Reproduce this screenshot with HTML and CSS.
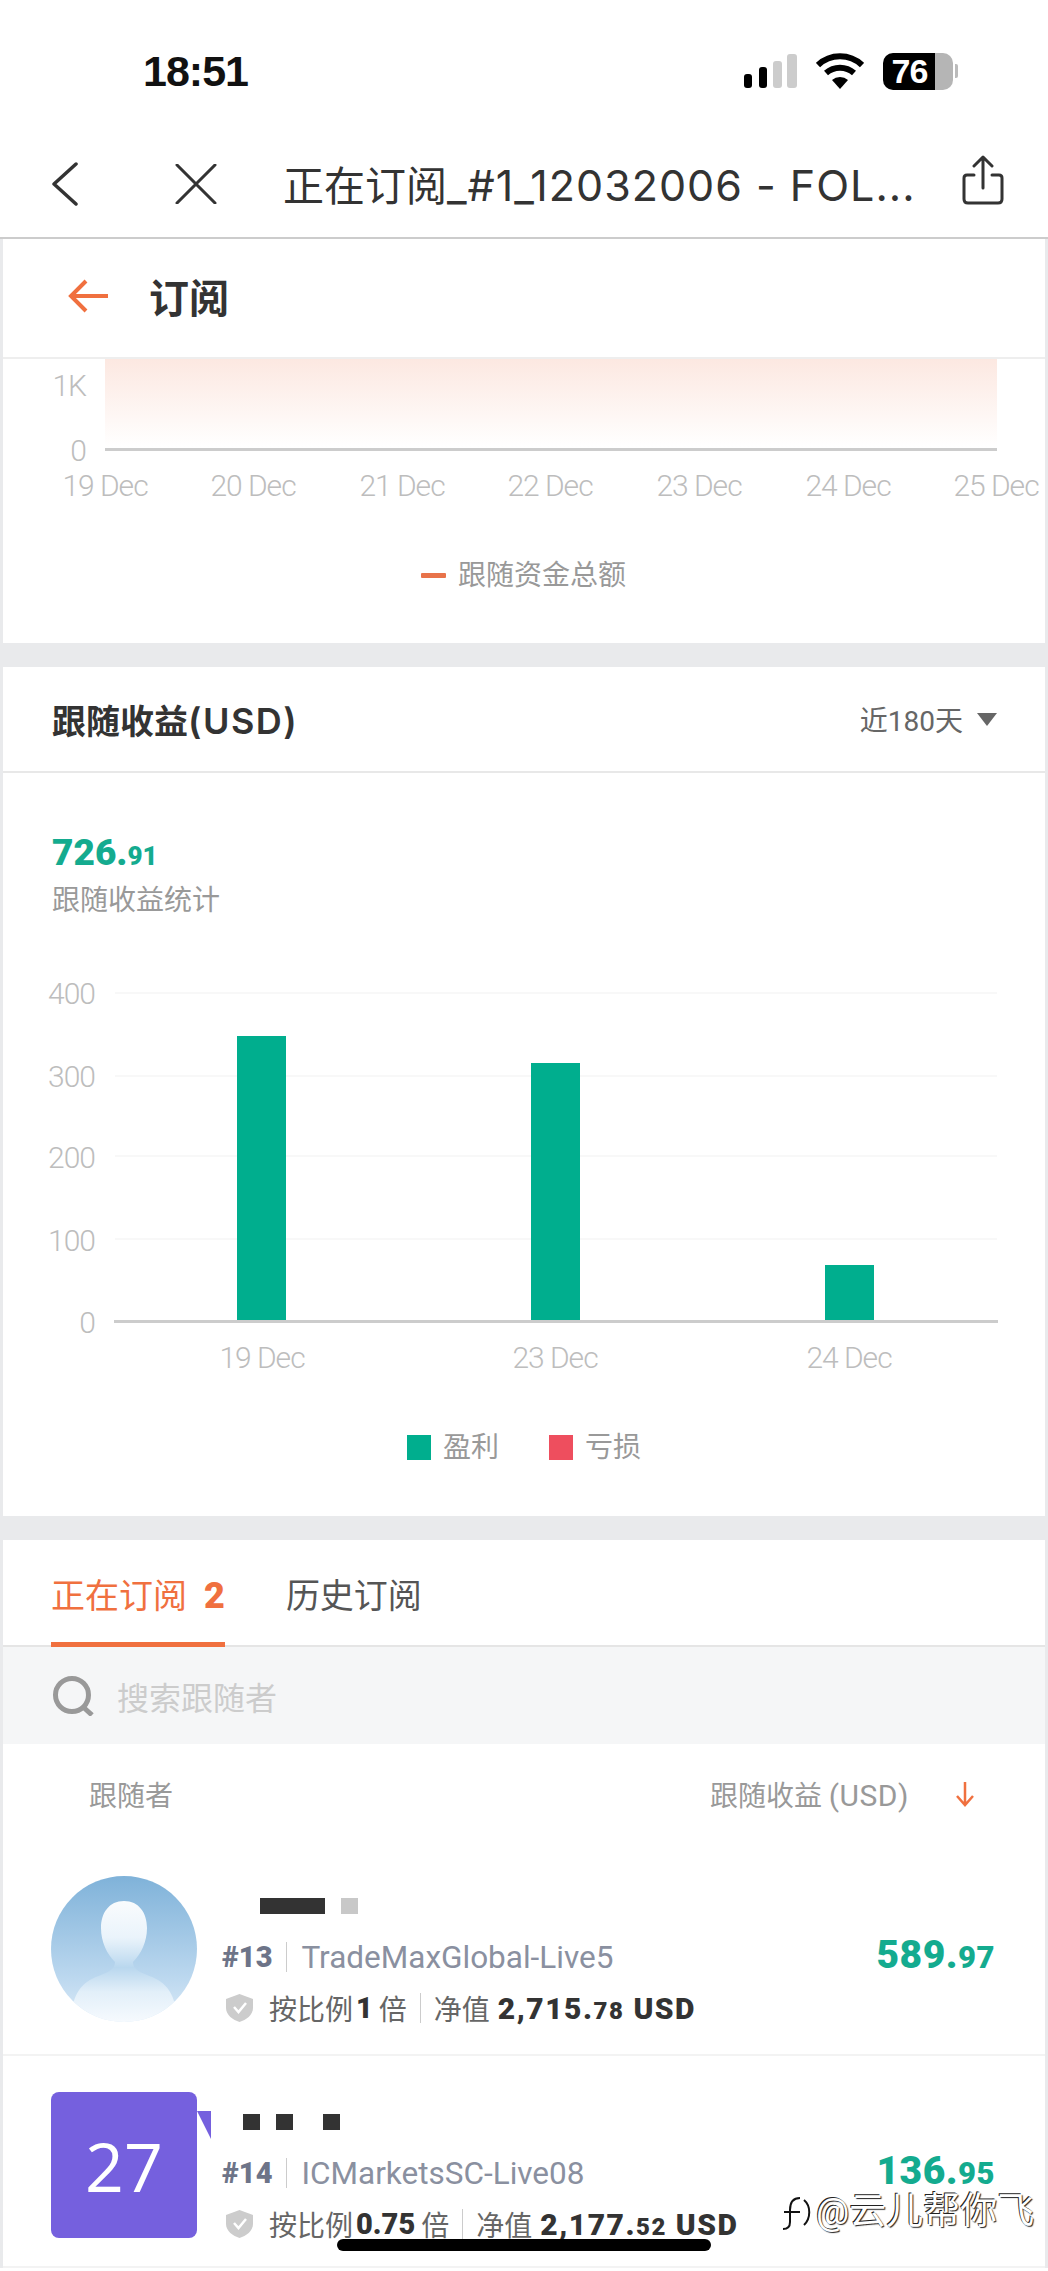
FILE: index.html
```html
<!DOCTYPE html>
<html lang="zh">

<head>
  <meta charset="UTF-8">
  <meta name="viewport" content="width=device-width, initial-scale=1.0">
  <link rel="stylesheet" href="styles.css">
  <title>正在订阅</title>
</head>

<body>
  <div class="status-bar">
    <span class="clock">18:51</span>
    <div class="status-icons">
      <svg class="signal" width="54" height="34" viewBox="0 0 54 34">
        <rect x="0" y="20" width="8" height="14" rx="3" fill="#000" />
        <rect x="15" y="13" width="8" height="21" rx="3" fill="#000" />
        <rect x="29" y="7" width="9" height="27" rx="3" fill="#ccc" />
        <rect x="43" y="0" width="10" height="34" rx="3" fill="#ccc" />
      </svg>
      <svg class="wifi" width="48" height="36" viewBox="0 0 48 36">
        <path d="M2 12 A32 32 0 0 1 46 12" fill="none" stroke="#000" stroke-width="6" />
        <path d="M10 20 A21 21 0 0 1 38 20" fill="none" stroke="#000" stroke-width="6" />
        <path d="M16 27 L24 36 L32 27 A12 12 0 0 0 16 27 Z" fill="#000" />
      </svg>
      <div class="battery"><span>76</span></div>
      <div class="battery-nub"></div>
    </div>
  </div>

  <div class="nav">
    <svg class="nav-back" width="27" height="44" viewBox="0 0 27 44">
      <path d="M25 2 L3 22 L25 42" fill="none" stroke="#333" stroke-width="3.5" stroke-linecap="round" stroke-linejoin="round" />
    </svg>
    <svg class="nav-close" width="42" height="40" viewBox="0 0 42 40">
      <path d="M2 1 L40 39 M40 1 L2 39" fill="none" stroke="#333" stroke-width="3" stroke-linecap="round" />
    </svg>
    <div class="nav-title">正在订阅<span>_#1_12032006 - FOL...</span></div>
    <svg class="nav-share" width="42" height="50" viewBox="0 0 42 50">
      <path d="M12 20 H5 Q2 20 2 23 V44 Q2 48 6 48 H36 Q40 48 40 44 V23 Q40 20 37 20 H30" fill="none" stroke="#333" stroke-width="3" stroke-linecap="round" />
      <path d="M21 33 V3 M12 11 L21 2 L30 11" fill="none" stroke="#333" stroke-width="3" stroke-linecap="round" stroke-linejoin="round" />
    </svg>
  </div>

  <div class="page">
    <div class="sub-head">
      <svg width="42" height="34" viewBox="0 0 42 34">
        <path d="M40 17 H3 M18 2 L3 17 L18 32" fill="none" stroke="#f0703f" stroke-width="4" stroke-linejoin="miter" />
      </svg>
      <span>订阅</span>
    </div>

    <!-- 跟随资金总额 -->
    <section class="card">
      <svg class="chart chart-funds" viewBox="3 359 1042 284" width="1042" height="284">
        <defs>
          <linearGradient id="area" x1="0" y1="0" x2="0" y2="1">
            <stop offset="0" stop-color="#fce8e1" />
            <stop offset="1" stop-color="#fff" />
          </linearGradient>
        </defs>
        <rect x="105" y="359" width="892" height="88" fill="url(#area)" />
        <rect x="105" y="448" width="892" height="3" fill="#ccc" />
        <text class="tick" x="86" y="396" text-anchor="end">1K</text>
        <text class="tick" x="86" y="461" text-anchor="end">0</text>
        <text class="tick" x="105" y="496" text-anchor="middle">19 Dec</text>
        <text class="tick" x="253" y="496" text-anchor="middle">20 Dec</text>
        <text class="tick" x="402" y="496" text-anchor="middle">21 Dec</text>
        <text class="tick" x="550" y="496" text-anchor="middle">22 Dec</text>
        <text class="tick" x="699" y="496" text-anchor="middle">23 Dec</text>
        <text class="tick" x="848" y="496" text-anchor="middle">24 Dec</text>
        <text class="tick" x="996" y="496" text-anchor="middle">25 Dec</text>
        <rect x="421" y="573" width="25" height="5" rx="1" fill="#e8734a" />
        <text class="legend" x="458" y="585">跟随资金总额</text>
      </svg>
    </section>

    <section class="card card-gap">
      <div class="card-head">
        <h2>跟随收益<span>(USD)</span></h2>
        <div class="range">近180天<i class="caret"></i></div>
      </div>
      <div class="total">
        <div class="total-num">726.<small>91</small></div>
        <div class="total-label">跟随收益统计</div>
      </div>
      <svg class="chart chart-profit" viewBox="3 940 1042 576" width="1042" height="576">
        <g fill="#f8f8f8">
          <rect x="115" y="992" width="882" height="2" />
          <rect x="115" y="1075" width="882" height="2" />
          <rect x="115" y="1155" width="882" height="2" />
          <rect x="115" y="1238" width="882" height="2" />
        </g>
        <g fill="#00ae8e">
          <rect x="237" y="1036" width="49" height="285" />
          <rect x="531" y="1063" width="49" height="258" />
          <rect x="825" y="1265" width="49" height="56" />
        </g>
        <rect x="114" y="1320" width="884" height="3" fill="#ccc" />
        <text class="tick" x="95" y="1004" text-anchor="end">400</text>
        <text class="tick" x="95" y="1087" text-anchor="end">300</text>
        <text class="tick" x="95" y="1168" text-anchor="end">200</text>
        <text class="tick" x="95" y="1251" text-anchor="end">100</text>
        <text class="tick" x="95" y="1333" text-anchor="end">0</text>
        <text class="tick" x="262" y="1368" text-anchor="middle">19 Dec</text>
        <text class="tick" x="555" y="1368" text-anchor="middle">23 Dec</text>
        <text class="tick" x="849" y="1368" text-anchor="middle">24 Dec</text>
        <rect x="407" y="1435" width="24" height="25" fill="#00ae8e" />
        <text class="legend" x="443" y="1457">盈利</text>
        <rect x="549" y="1435" width="24" height="25" fill="#ee4e5e" />
        <text class="legend" x="585" y="1457">亏损</text>
      </svg>
    </section>

    <section class="card card-gap">
      <div class="tabs">
        <div class="tab active">正在订阅<b>2</b></div>
        <div class="tab">历史订阅</div>
      </div>
      <div class="search">
        <svg width="42" height="40" viewBox="0 0 42 40">
          <circle cx="20" cy="19" r="16.5" fill="none" stroke="#999" stroke-width="5" />
          <path d="M30 30 L40 39" stroke="#999" stroke-width="5" />
        </svg>
        <span>搜索跟随者</span>
      </div>
      <div class="list-head">
        <span>跟随者</span>
        <span class="sort"><span>跟随收益 <em>(USD)</em></span>
          <svg width="20" height="26" viewBox="0 0 20 26">
            <path d="M10 1 V24 M2 15 L10 24 L18 15" fill="none" stroke="#f0703f" stroke-width="2.5" />
          </svg>
        </span>
      </div>

      <div class="row">
        <svg class="avatar" width="146" height="146" viewBox="0 0 146 146">
          <defs>
            <linearGradient id="sky" x1="0" y1="0" x2="0" y2="1">
              <stop offset="0" stop-color="#7fb2d9" />
              <stop offset="0.7" stop-color="#bcd8ef" />
              <stop offset="1" stop-color="#dcebf8" />
            </linearGradient>
            <linearGradient id="person" x1="0" y1="0" x2="0" y2="1">
              <stop offset="0" stop-color="#fff" stop-opacity="0.95" />
              <stop offset="0.3" stop-color="#eef6fc" stop-opacity="0.95" />
              <stop offset="0.55" stop-color="#b9d7ee" />
              <stop offset="0.75" stop-color="#e2eff9" />
              <stop offset="1" stop-color="#f6fafe" />
            </linearGradient>
            <clipPath id="round"><circle cx="73" cy="73" r="73" /></clipPath>
          </defs>
          <g clip-path="url(#round)">
            <rect width="146" height="146" fill="url(#sky)" />
            <path d="M73 25 C58 25 50 37 50 52 C50 66 56 78 64 86 C64 92 60 95 50 99 C34 105 22 112 19 146 H127 C124 112 112 105 96 99 C86 95 82 92 82 86 C90 78 96 66 96 52 C96 37 88 25 73 25 Z" fill="url(#person)" />
          </g>
        </svg>
        <div class="info">
          <div class="name name-a"><i class="dark w65"></i><i class="light w17"></i></div>
          <div class="server"><b>#13</b><i class="sep"></i>TradeMaxGlobal-Live5</div>
          <div class="meta">
            <svg class="shield" width="27" height="28" viewBox="0 0 27 28">
              <path d="M13.5 0 L27 5 V14 C27 21 20 26 13.5 28 C7 26 0 21 0 14 V5 Z" fill="#ccc" />
              <path d="M8 13 L12.5 18 L20 9" fill="none" stroke="#fff" stroke-width="2.5" />
            </svg>
            <span>按比例</span><b class="ratio">1</b><span>倍</span><i class="sep"></i><span>净值</span>
            <b class="equity">2,715.<small>78</small> USD</b>
          </div>
        </div>
        <div class="amount">589.<small>97</small></div>
      </div>

      <div class="row row-last">
        <div class="avatar avatar-num">27<i class="flag"></i></div>
        <div class="info">
          <div class="name name-b"><i class="dark w17"></i><i class="dark w17"></i><i class="dark w17 far"></i></div>
          <div class="server"><b>#14</b><i class="sep"></i>ICMarketsSC-Live08</div>
          <div class="meta">
            <svg class="shield" width="27" height="28" viewBox="0 0 27 28">
              <path d="M13.5 0 L27 5 V14 C27 21 20 26 13.5 28 C7 26 0 21 0 14 V5 Z" fill="#ccc" />
              <path d="M8 13 L12.5 18 L20 9" fill="none" stroke="#fff" stroke-width="2.5" />
            </svg>
            <span>按比例</span><b class="ratio">0.75</b><span>倍</span><i class="sep"></i><span>净值</span>
            <b class="equity">2,177.<small>52</small> USD</b>
          </div>
        </div>
        <div class="amount">136.<small>95</small></div>
      </div>
    </section>
  </div>

  <div class="home-bar"></div>
  <div class="watermark">
    <svg width="36" height="40" viewBox="0 0 36 40">
      <path d="M22 6 C14 6 12 12 12 18 V30 C12 35 9 37 5 37 M6 20 H22 M26 8 C33 14 33 26 26 33" fill="none" stroke="#fff" stroke-width="5" />
      <path d="M22 6 C14 6 12 12 12 18 V30 C12 35 9 37 5 37 M6 20 H22 M26 8 C33 14 33 26 26 33" fill="none" stroke="#111" stroke-width="2" />
    </svg>
    <span>@云儿帮你飞</span>
  </div>
</body>

</html>
```

FILE: styles.css
```css
* {
  box-sizing: border-box;
}

html,
body {
  margin: 0;
  padding: 0;
}

body {
  position: relative;
  width: 1048px;
  height: 2271px;
  overflow: hidden;
  background-color: #fff;
  color: #333;
  font-family: "Roboto", "Noto Sans CJK SC", sans-serif;
}

.status-bar {
  display: flex;
  justify-content: space-between;
  align-items: center;
  height: 142px;
  padding: 0 90px 0 143px;
}

.clock {
  color: #111;
  font-family: "Liberation Sans", sans-serif;
  font-size: 43px;
  font-weight: 700;
  letter-spacing: -1px;
}

.status-icons {
  display: flex;
  align-items: center;
}

.wifi {
  margin-left: 18px;
}

.battery {
  display: flex;
  align-items: center;
  justify-content: center;
  width: 70px;
  height: 37px;
  margin-left: 19px;
  padding-right: 17px;
  border-radius: 10px;
  background: linear-gradient(90deg, #000 75%, #b5b5b5 75%);
  color: #fff;
  font-family: "Liberation Sans", sans-serif;
  font-size: 34px;
  font-weight: 700;
  letter-spacing: -1px;
}

.battery-nub {
  width: 3px;
  height: 14px;
  margin-left: 2px;
  border-radius: 0 2px 2px 0;
  background-color: #bbb;
}

.nav {
  display: flex;
  align-items: center;
  height: 97px;
  padding-left: 51px;
  padding-bottom: 12px;
  border-bottom: 2px solid #ccc;
}

.nav-close {
  margin-left: 97px;
}

.nav-title {
  width: 679px;
  margin-left: 66px;
  color: #333;
  font-family: "Noto Sans CJK SC", sans-serif;
  font-size: 41px;
  line-height: 50px;
  white-space: nowrap;
}

.nav-title span {
  font-family: "Inter", sans-serif;
  font-size: 43px;
  letter-spacing: 1px;
}

.nav-share {
  margin-top: -8px;
}

.page {
  padding: 0 3px;
  background-color: #e9eaec;
}

.sub-head {
  display: flex;
  align-items: center;
  height: 120px;
  padding-left: 65px;
  padding-bottom: 4px;
  border-bottom: 2px solid #eee;
  background-color: #fff;
}

.sub-head span {
  margin-left: 39px;
  font-size: 40px;
  font-weight: 700;
}

.card {
  background-color: #fff;
}

.card-gap {
  margin-top: 24px;
}

.chart {
  display: block;
}

.tick {
  fill: #bdbdbd;
  font-family: "Roboto", sans-serif;
  font-size: 30px;
  font-weight: 300;
  letter-spacing: -1px;
}

.legend {
  fill: #999;
  font-family: "Noto Sans CJK SC", sans-serif;
  font-size: 28px;
}

.card-head {
  display: flex;
  justify-content: space-between;
  align-items: center;
  height: 106px;
  padding: 0 48px 0 49px;
  border-bottom: 2px solid #e8e8e8;
}

.card-head h2 {
  margin: 0;
  font-size: 34px;
  font-weight: 700;
}

.card-head h2 span {
  font-family: "Inter", sans-serif;
  font-size: 36px;
  font-weight: 600;
  letter-spacing: 1.5px;
}

.range {
  display: flex;
  align-items: center;
  color: #666;
  font-size: 28px;
}

.caret {
  width: 0;
  height: 0;
  margin-left: 14px;
  border-left: 10px solid transparent;
  border-right: 10px solid transparent;
  border-top: 13px solid #666;
}

.total {
  height: 0;
  padding: 58px 0 0 49px;
}

.total-num {
  color: #14ab8f;
  font-size: 37px;
  font-weight: 900;
  line-height: 44px;
}

.total-num small {
  font-size: 26px;
}

.total-label {
  margin-top: 3px;
  color: #999;
  font-size: 28px;
  line-height: 40px;
}

.chart-profit {
  margin-top: 109px;
}

.tabs {
  display: flex;
  height: 107px;
  padding-left: 48px;
  border-bottom: 2px solid #e5e5e5;
}

.tab {
  height: 107px;
  margin-right: 61px;
  padding-top: 32px;
  color: #555;
  font-size: 34px;
  line-height: 48px;
}

.tab b {
  margin-left: 17px;
  font-size: 36px;
  font-weight: 900;
}

.tab.active {
  border-bottom: 5px solid #f0703f;
  color: #f0703f;
}

.search {
  display: flex;
  align-items: center;
  height: 97px;
  padding-left: 49px;
  background-color: #f5f6f7;
  color: #ccc;
  font-size: 32px;
}

.search span {
  margin-left: 23px;
}

.list-head {
  display: flex;
  justify-content: space-between;
  align-items: center;
  height: 100px;
  padding: 0 70px 0 86px;
  color: #999;
  font-size: 28px;
}

.list-head em {
  font-size: 30px;
  font-style: normal;
  letter-spacing: 0.5px;
}

.sort {
  display: flex;
  align-items: center;
}

.sort svg {
  margin-left: 46px;
}

.row {
  display: flex;
  align-items: center;
  height: 212px;
  padding: 0 50px 0 48px;
  border-bottom: 2px solid #f3f3f3;
}

.row-last {
  height: 212px;
  padding-top: 8px;
}

.avatar {
  flex: none;
  width: 146px;
  height: 146px;
}

.avatar-num {
  position: relative;
  display: flex;
  align-items: center;
  justify-content: center;
  border-radius: 8px;
  background-color: #7560de;
  color: #fff;
  font-family: "Open Sans", sans-serif;
  font-size: 68px;
  font-weight: 500;
}

.flag {
  position: absolute;
  top: 19px;
  left: 146px;
  width: 14px;
  height: 28px;
  background-color: #7560de;
  clip-path: polygon(0 0, 100% 0, 100% 100%);
}

.info {
  margin-top: 16px;
  margin-left: 25px;
}

.name,
.server,
.meta {
  display: flex;
  align-items: center;
  height: 51px;
}

.name i {
  height: 16px;
}

.dark {
  background-color: #333;
}

.light {
  background-color: #c8c8c8;
}

.w65 {
  width: 65px;
}

.w17 {
  width: 17px;
}

.name-a {
  padding-left: 38px;
  gap: 16px;
}

.name-b {
  padding-left: 21px;
  gap: 16px;
}

.name-b .far {
  margin-left: 14px;
}

.server {
  color: #8a90a0;
  font-size: 31.5px;
}

.server b {
  color: #6d7488;
  font-size: 29px;
  font-weight: 900;
}

.sep {
  flex: none;
  width: 1px;
  height: 30px;
  margin: 0 14px;
  background-color: #ccc;
}

.meta {
  color: #666;
  font-size: 28px;
}

.meta .sep {
  margin: 0 13px;
}

.shield {
  margin: 0 16px 0 4px;
}

.ratio {
  margin: 0 6px 0 3px;
  color: #333;
  font-size: 29px;
  font-weight: 900;
}

.equity {
  margin-left: 8px;
  color: #333;
  font-size: 30px;
  font-weight: 900;
  letter-spacing: 1.5px;
  white-space: nowrap;
}

.equity small {
  font-size: 24px;
}

.amount {
  margin-top: 12px;
  margin-left: auto;
  color: #14ab8f;
  font-size: 39px;
  font-weight: 900;
  letter-spacing: 0.5px;
}

.amount small {
  font-size: 31px;
}

.home-bar {
  position: absolute;
  left: 337px;
  top: 2239px;
  width: 374px;
  height: 12px;
  border-radius: 6px;
  background-color: #000;
}

.watermark {
  position: absolute;
  left: 778px;
  top: 2192px;
  display: flex;
  align-items: center;
  gap: 2px;
  color: #fff;
  font-size: 37px;
  line-height: 40px;
  text-shadow: -1px -1px 0 #222, 1px 1px 1px #222;
}
```
